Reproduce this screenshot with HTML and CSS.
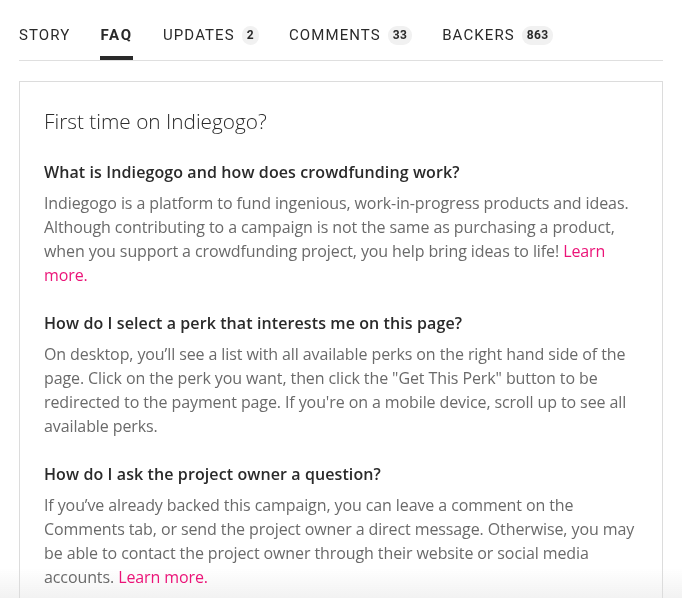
FILE: index.html
```html
<!DOCTYPE html>
<html lang="en">
<head>
    <meta charset="UTF-8">
    <meta name="viewport" content="width=device-width, initial-scale=1.0">
    <title>FAQ</title>
    <link rel="stylesheet" href="styles.css">
</head>
<body>
    <header>
        <nav class="tabs">
            <a class="tab" href="#story">Story</a>
            <a class="tab active" href="#faq">FAQ</a>
            <a class="tab" href="#updates">Updates <span class="badge">2</span></a>
            <a class="tab" href="#comments">Comments <span class="badge">33</span></a>
            <a class="tab" href="#backers">Backers <span class="badge">863</span></a>
        </nav>
    </header>

    <main>
        <section class="faq-box">
            <h2>First time on Indiegogo?</h2>

            <div class="faq-item">
                <h3>What is Indiegogo and how does crowdfunding work?</h3>
                <p>Indiegogo is a platform to fund ingenious, work-in-progress products and ideas. Although contributing to a campaign is not the same as purchasing a product, when you support a crowdfunding project, you help bring ideas to life! <a href="#">Learn more.</a></p>
            </div>

            <div class="faq-item">
                <h3>How do I select a perk that interests me on this page?</h3>
                <p>On desktop, you’ll see a list with all available perks on the right hand side of the page. Click on the perk you want, then click the "Get This Perk" button to be redirected to the payment page. If you're on a mobile device, scroll up to see all available perks.</p>
            </div>

            <div class="faq-item">
                <h3>How do I ask the project owner a question?</h3>
                <p>If you’ve already backed this campaign, you can leave a comment on the Comments tab, or send the project owner a direct message. Otherwise, you may be able to contact the project owner through their website or social media accounts. <a href="#">Learn more.</a></p>
            </div>
        </section>
    </main>

    <div class="fade"></div>
</body>
</html>
```

FILE: styles.css
```css
body {
    font-family: "Open Sans", "Liberation Sans", sans-serif;
    margin: 0;
    padding: 0 19px;
    background-color: #fff;
    color: #2a2a2a;
}

.tabs {
    display: flex;
    gap: 30px;
    height: 60px;
    border-bottom: 1px solid #dfdfdf;
    font-family: Roboto, "Liberation Sans", sans-serif;
}

.tab {
    display: flex;
    align-items: center;
    gap: 7px;
    height: 60px;
    padding-top: 14px;
    box-sizing: border-box;
    border-bottom: 4px solid transparent;
    color: #2a2a2a;
    text-decoration: none;
    text-transform: uppercase;
    font-size: 15px;
    letter-spacing: 1.1px;
}

.tab.active {
    font-weight: bold;
    letter-spacing: 1.8px;
    border-bottom-color: #2a2a2a;
}

.badge {
    background-color: #f1f1f1;
    border-radius: 9px;
    padding: 0 5px;
    height: 19px;
    line-height: 19px;
    font-size: 12px;
    font-weight: bold;
    letter-spacing: 0.3px;
}

.faq-box {
    margin-top: 20px;
    border: 1px solid #dcdcdc;
    padding: 24px 24px 40px;
}

.faq-box h2 {
    margin: 0 0 24px;
    font-size: 20.8px;
    font-weight: 300;
    line-height: 30px;
}

.faq-item {
    margin-bottom: 24px;
}

.faq-item h3 {
    margin: 0 0 7px;
    font-size: 16px;
    font-weight: 600;
    line-height: 24px;
    letter-spacing: 0.1px;
}

.faq-item p {
    margin: 0;
    font-size: 16px;
    line-height: 24px;
    color: #6a6a6a;
    letter-spacing: -0.1px;
}

.faq-item a {
    color: #eb1478;
    text-decoration: none;
}

/* page background fades to grey at the bottom, behind the text */
.fade {
    position: fixed;
    z-index: -1;
    left: 0;
    right: 0;
    bottom: 0;
    height: 30px;
    background: linear-gradient(rgba(242, 242, 242, 0), rgba(242, 242, 242, 1));
}
```
